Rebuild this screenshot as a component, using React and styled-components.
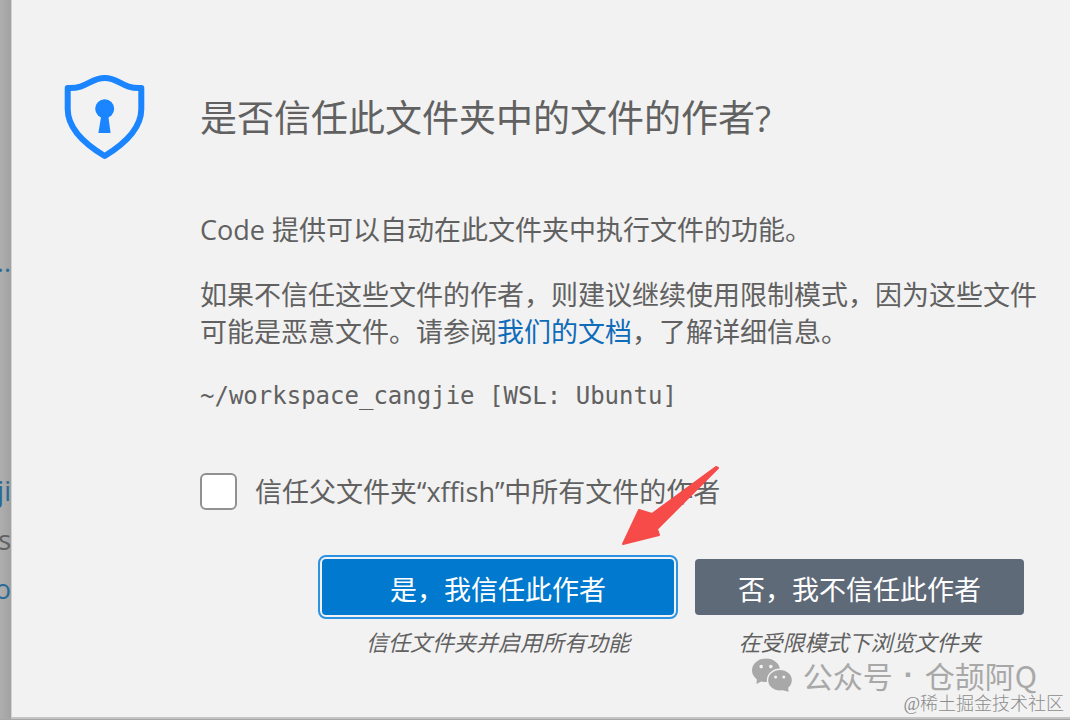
import styled, { createGlobalStyle } from "styled-components";

const GlobalStyle = createGlobalStyle`
  * {
    box-sizing: border-box;
  }

  body {
    margin: 0;
    background: #a6a6a6;
    color: #616161;
    font-family: "Open Sans", "Noto Sans CJK SC", sans-serif;
    font-size: 27px;
    line-height: 37px;
  }
`;

const Page = styled.div`
  min-height: 100vh;
  display: grid;
  grid-template-columns: 11px minmax(0, 1fr);
  padding-bottom: 1px;
`;

const Backdrop = styled.aside`
  display: flex;
  flex-direction: column;
  align-items: flex-end;
  overflow: hidden;
  padding-top: 246px;
  background: linear-gradient(to right, #aeaeae, #a2a2a2);
  line-height: 49px;
`;

const BackdropLink = styled.a`
  color: #2a6a99;
  text-decoration: none;
  line-height: 32px;
`;

const BackdropList = styled.div`
  display: flex;
  flex-direction: column;
  align-items: flex-end;
  margin-top: 188px;

  ${BackdropLink} {
    line-height: 49px;
  }
`;

const Dialog = styled.main`
  position: relative;
  display: flex;
  align-items: flex-start;
  gap: 55px;
  padding: 74px 32px 56px 52px;
  background: #f2f2f2;
  border-left: 1px solid #d2d2d2;
  border-bottom: 2px solid #c4c4c4;
`;

const ShieldIcon = styled.svg`
  flex: none;
  width: 81px;
  height: 86px;
`;

const Content = styled.div`
  flex: 1;
  min-width: 0;
`;

const Title = styled.h1`
  margin: 19px 0 68px;
  font-size: 37px;
  font-weight: 400;
  line-height: 50px;
`;

const Paragraph = styled.p`
  margin: 0 0 28px;
`;

const DocsLink = styled.a`
  color: #0f6cb8;
  text-decoration: none;
`;

const FolderPath = styled.p`
  margin: 0;
  font-family: "DejaVu Sans Mono", monospace;
  font-size: 24px;
`;

const TrustParent = styled.label`
  display: flex;
  align-items: center;
  gap: 18px;
  margin-top: 58px;
`;

const Checkbox = styled.input`
  appearance: none;
  flex: none;
  width: 37px;
  height: 37px;
  margin: 0;
  background: #ffffff;
  border: 2px solid #919191;
  border-radius: 6px;

  &:checked {
    background: #007acc;
  }
`;

const Actions = styled.div`
  display: grid;
  grid-template-columns: 352fr 329fr;
  gap: 21px;
  margin: 49px 14px 0 122px;
`;

const Action = styled.div`
  position: relative;
  display: flex;
  flex-direction: column;
  gap: 9px;
`;

const ActionButton = styled.button`
  height: 56px;
  padding: 4px 0 0;
  border: none;
  border-radius: 4px;
  background: ${({ $primary }) => ($primary ? "#0079ce" : "#5f6a79")};
  color: #ffffff;
  font: inherit;
  cursor: pointer;
  outline: ${({ $primary }) => ($primary ? "2px solid #2b93e3" : "none")};
  outline-offset: 2px;
`;

const ActionHint = styled.p`
  margin: 0;
  font-size: 22px;
  font-style: italic;
  text-align: center;
`;

const Arrow = styled.svg`
  position: absolute;
  top: -95px;
  right: -46px;
  width: 100px;
  height: 84px;
  pointer-events: none;
`;

const AccountMark = styled.div`
  position: absolute;
  right: 33px;
  bottom: 22px;
  display: flex;
  align-items: center;
  gap: 11px;
  color: #a8a8a8;
  font-family: "Noto Sans CJK SC", sans-serif;
  font-size: 30px;
  line-height: 40px;
`;

const MarkDot = styled.span`
  font-family: "Liberation Sans", sans-serif;
  font-weight: 700;
`;

const ChatIcon = styled.svg`
  width: 40px;
  height: 34px;
`;

const SiteMark = styled.div`
  position: absolute;
  right: 6px;
  bottom: 1px;
  color: #8c8c8c;
  font-family: "Liberation Serif", "Noto Sans CJK SC", serif;
  font-size: 18px;
  font-weight: 300;
  line-height: 24px;
`;

const Shield = () => (
  <ShieldIcon viewBox="0 0 81 86" aria-hidden="true">
    <path
      d="M3.7 14C23 15 26 4 40.7 4S58 15 77.3 14V35C77.3 53 62 69 40.7 82C19 69 3.7 53 3.7 35Z"
      fill="none"
      stroke="#1a85ff"
      strokeWidth="6"
      strokeLinejoin="round"
    />
    <circle cx="40.7" cy="34.7" r="9.5" fill="#1a85ff" />
    <path d="M37.5 40H44L46.6 59H34.4Z" fill="#1a85ff" />
  </ShieldIcon>
);

const PointerArrow = () => (
  <Arrow viewBox="0 0 100 84" aria-hidden="true">
    <path
      d="M3 80L19 46L32 50L96 3L98 4L37 65L39 71Z"
      fill="#f64b48"
      stroke="#f64b48"
      strokeWidth="2"
      strokeLinejoin="round"
    />
  </Arrow>
);

const ChatBubbles = () => (
  <ChatIcon viewBox="0 0 40 34" aria-hidden="true">
    <g fill="currentColor">
      <ellipse cx="14" cy="12.3" rx="14" ry="11.8" />
      <path d="M5 19L4.5 26L12 22Z" />
      <ellipse
        cx="28"
        cy="22.3"
        rx="12.5"
        ry="11"
        stroke="#f2f2f2"
        strokeWidth="1.4"
      />
      <path d="M30 32L36.5 33.8L36 28Z" />
    </g>
    <g fill="#f2f2f2">
      <circle cx="9.2" cy="8.6" r="1.8" />
      <circle cx="18.8" cy="8.6" r="1.8" />
      <circle cx="23.6" cy="19" r="1.5" />
      <circle cx="31.8" cy="19" r="1.5" />
    </g>
  </ChatIcon>
);

const App = () => {
  return (
    <>
      <GlobalStyle />
      <Page>
        <Backdrop>
          <BackdropLink href="#start">..</BackdropLink>
          <BackdropList>
            <BackdropLink href="#cangjie">ji</BackdropLink>
            <span>s</span>
            <BackdropLink href="#repo">o</BackdropLink>
          </BackdropList>
        </Backdrop>
        <Dialog>
          <Shield />
          <Content>
            <Title>是否信任此文件夹中的文件的作者?</Title>
            <Paragraph>Code 提供可以自动在此文件夹中执行文件的功能。</Paragraph>
            <Paragraph>
              如果不信任这些文件的作者，则建议继续使用限制模式，因为这些文件可能是恶意文件。请参阅
              <DocsLink href="#docs">我们的文档</DocsLink>，了解详细信息。
            </Paragraph>
            <FolderPath>~/workspace_cangjie [WSL: Ubuntu]</FolderPath>
            <TrustParent>
              <Checkbox type="checkbox" />
              <span>信任父文件夹“xffish”中所有文件的作者</span>
            </TrustParent>
            <Actions>
              <Action>
                <ActionButton type="button" $primary>
                  是，我信任此作者
                </ActionButton>
                <ActionHint>信任文件夹并启用所有功能</ActionHint>
                <PointerArrow />
              </Action>
              <Action>
                <ActionButton type="button">否，我不信任此作者</ActionButton>
                <ActionHint>在受限模式下浏览文件夹</ActionHint>
              </Action>
            </Actions>
          </Content>
          <AccountMark>
            <ChatBubbles />
            <span>公众号</span>
            <MarkDot>·</MarkDot>
            <span>仓颉阿Q</span>
          </AccountMark>
          <SiteMark>@稀土掘金技术社区</SiteMark>
        </Dialog>
      </Page>
    </>
  );
};

export default App;
